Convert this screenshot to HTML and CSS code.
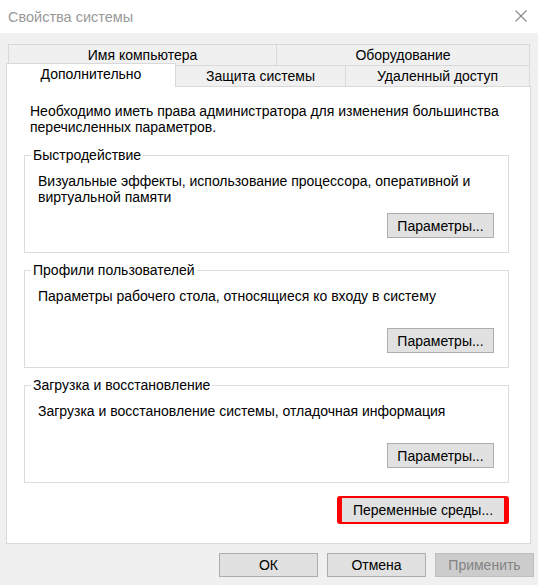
FILE: index.html
```html
<!DOCTYPE html>
<html lang="ru">
<head>
<meta charset="utf-8">
<title>Свойства системы</title>
<link rel="stylesheet" href="styles.css">
</head>
<body>
<div class="window">
  <div class="titlebar">
    <span class="title">Свойства системы</span>
    <svg class="close" width="12" height="12" viewBox="0 0 12 12" aria-hidden="true"><path d="M0.5 0.5 L11.5 11.5 M11.5 0.5 L0.5 11.5" stroke="#8a8a8a" stroke-width="1.1" fill="none"/></svg>
  </div>
  <div class="content">
    <div class="tabs">
      <div class="tab-row row1">
        <div class="tab t-name">Имя компьютера</div>
        <div class="tab t-hw last">Оборудование</div>
      </div>
      <div class="tab-row row2">
        <div class="tab active t-adv">Дополнительно</div>
        <div class="tab t-prot">Защита системы</div>
        <div class="tab t-remote last">Удаленный доступ</div>
      </div>
    </div>
    <div class="panel">
      <p class="note">Необходимо иметь права администратора для изменения большинства<br>перечисленных параметров.</p>

      <fieldset class="group">
        <legend>Быстродействие</legend>
        <div class="group-body">
          <p class="desc">Визуальные эффекты, использование процессора, оперативной и<br>виртуальной памяти</p>
          <div class="actions"><button class="btn param">Параметры...</button></div>
        </div>
      </fieldset>

      <fieldset class="group">
        <legend>Профили пользователей</legend>
        <div class="group-body">
          <p class="desc">Параметры рабочего стола, относящиеся ко входу в систему</p>
          <div class="actions"><button class="btn param">Параметры...</button></div>
        </div>
      </fieldset>

      <fieldset class="group">
        <legend>Загрузка и восстановление</legend>
        <div class="group-body">
          <p class="desc">Загрузка и восстановление системы, отладочная информация</p>
          <div class="actions"><button class="btn param">Параметры...</button></div>
        </div>
      </fieldset>

      <div class="env">
        <span class="highlight"><button class="btn env-btn">Переменные среды...</button></span>
      </div>
    </div>
    <div class="dialog-buttons">
      <button class="btn dlg">ОК</button>
      <button class="btn dlg">Отмена</button>
      <button class="btn dlg" disabled>Применить</button>
    </div>
  </div>
</div>
</body>
</html>
```

FILE: styles.css
```css
* { box-sizing: border-box; }
html, body { margin: 0; padding: 0; }
body {
  width: 538px;
  height: 585px;
  overflow: hidden;
  background: #f0f0f0;
  font-family: "Liberation Sans", Arial, sans-serif;
  font-size: 14px;
  color: #000;
}
.titlebar {
  height: 33px;
  background: #fff;
  display: flex;
  align-items: center;
  justify-content: space-between;
  padding: 0 11px 0 8px;
}
.title { color: #999; font-size: 14.5px; line-height: 16px; }
.close { display: block; margin-top: -2px; }

.content { padding: 11px 0 0 6px; }

.tabs { width: 524px; }
.tab-row { display: flex; height: 21px; }
.row1 { margin-left: 2px; }
.tab {
  border-top: 1px solid #d9d9d9;
  border-left: 1px solid #d9d9d9;
  background: #f0f0f0;
  text-align: center;
  line-height: 20px;
  white-space: nowrap;
}
.tab.last { border-right: 1px solid #d9d9d9; }
.t-name { width: 268px; }
.t-hw { width: 254px; }
.t-adv { width: 170px; }
.t-prot { width: 169px; }
.t-remote { width: 185px; }
.tab.active {
  position: relative;
  z-index: 1;
  background: #fff;
  border-right: 1px solid #d9d9d9;
  height: 24px;
  margin-top: -2px;
  line-height: 20px;
}
.tab.active + .tab { border-left: none; }

.panel {
  width: 525px;
  height: 458px;
  background: #fff;
  border: 1px solid #d9d9d9;
  padding: 16px 21px 0 17px;
}
.note { margin: 0 0 0 6px; line-height: 16px; }

.group {
  margin: 9px 0 0;
  padding: 0;
  border: 1px solid #dcdcdc;
  min-width: 0;
}
.note + .group { margin-top: 12px; }
.group legend {
  margin-left: 6px;
  padding: 0 2px;
  line-height: 16px;
}
.group-body { padding: 10px 14px 14px 13px; }
.desc { margin: 0; line-height: 16px; min-height: 32px; }
.actions { display: flex; justify-content: flex-end; margin-top: 8px; }

.btn {
  font-family: inherit;
  font-size: 14px;
  color: #000;
  background: #e1e1e1;
  border: 1px solid #adadad;
  padding: 0;
  margin: 0;
  text-align: center;
}
.param { width: 107px; height: 25px; }

.env { display: flex; justify-content: flex-end; margin-top: 13px; }
.highlight {
  display: block;
  background: #f00;
  padding: 2px 5px;
  border-radius: 3px;
}
.env-btn { display: block; width: 162px; height: 24px; border: none; }

.dialog-buttons {
  display: flex;
  justify-content: flex-end;
  gap: 9px;
  margin-top: 9px;
  padding-right: 4px;
}
.dlg { width: 99px; height: 24px; }
.dlg:disabled {
  background: #cccccc;
  border-color: #bfbfbf;
  color: #838383;
}
```
